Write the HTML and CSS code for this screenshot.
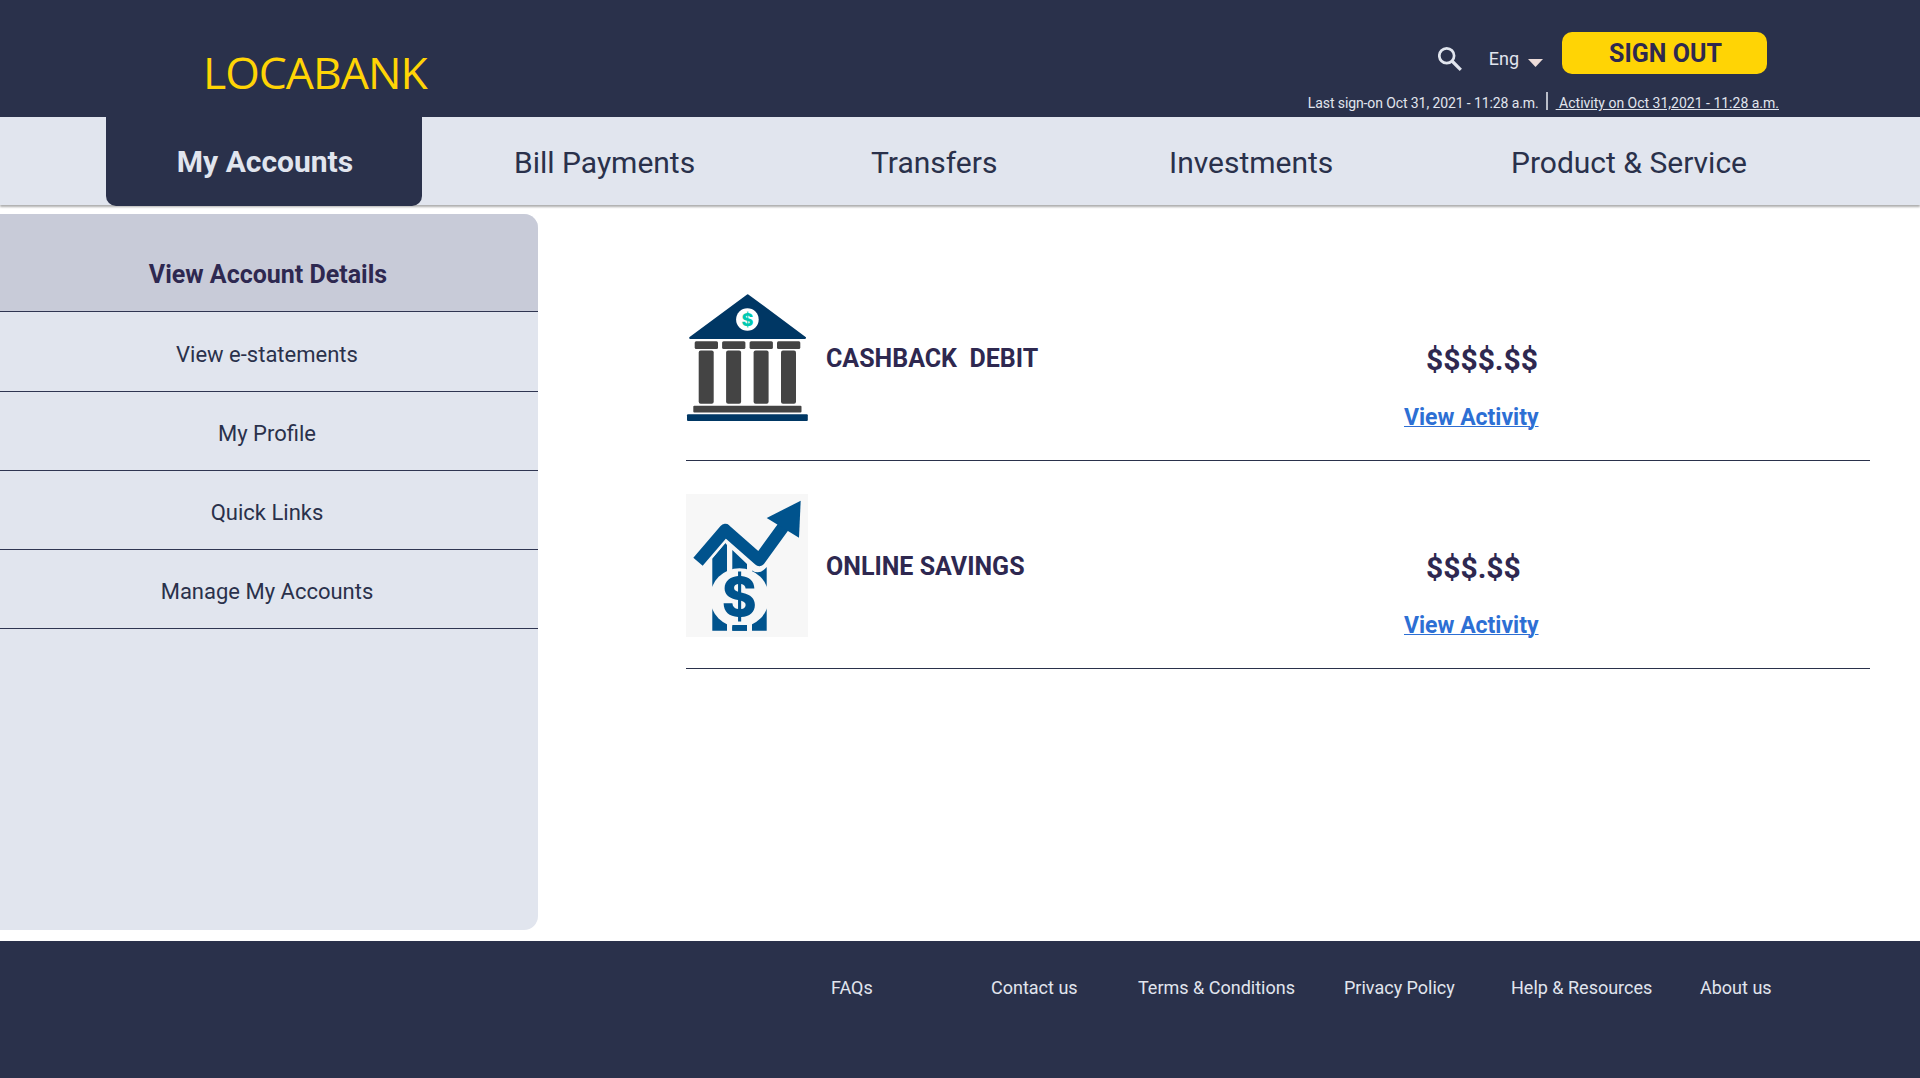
FILE: index.html
```html
<!DOCTYPE html>
<html lang="en">
<head>
<meta charset="utf-8">
<title>LOCABANK - My Accounts</title>
<link rel="stylesheet" href="styles.css">
</head>
<body>
<header class="header">
  <div class="logo">LOCABANK</div>
  <div class="header-side">
    <div class="tools">
      <svg class="search" viewBox="0 0 24 24" aria-hidden="true"><circle cx="8.700" cy="8.800" r="7.400" fill="none" stroke="#e1e5ee" stroke-width="2.700"/><path d="M14 14l8.800 8.800" stroke="#e1e5ee" stroke-width="3.200"/></svg>
      <span class="lang">Eng</span>
      <svg class="caret" viewBox="0 0 15 8" aria-hidden="true"><path d="M0 0h15L7.500 8z" fill="#eddcd9"/></svg>
      <button class="signout">SIGN OUT</button>
    </div>
    <div class="session">
      <span class="last">Last sign-on Oct 31, 2021 - 11:28 a.m.</span>
      <span class="bar"></span>
      <a class="activity"> Activity on Oct 31,2021 - 11:28 a.m.</a>
    </div>
  </div>
</header>
<nav class="nav">
  <a class="tab active">My Accounts</a>
  <a class="tab">Bill Payments</a>
  <a class="tab">Transfers</a>
  <a class="tab">Investments</a>
  <a class="tab">Product &amp; Service</a>
</nav>
<main class="main">
  <aside class="side">
    <a class="side-item current">View Account Details</a>
    <a class="side-item">View e-statements</a>
    <a class="side-item">My Profile</a>
    <a class="side-item">Quick Links</a>
    <a class="side-item">Manage My Accounts</a>
  </aside>
  <section class="accounts">
    <article class="account">
      <svg class="pic" viewBox="0 0 122 143" aria-hidden="true">
        <path d="M61.700 9.200L119 51.900H4.200z" fill="#003764" stroke="#003764" stroke-width="2" stroke-linejoin="round"/>
        <circle cx="61.400" cy="33.500" r="11.300" fill="#fff"/>
        <text class="coin-small" x="61.400" y="40" text-anchor="middle">$</text>
        <g fill="#444">
          <rect x="8.700" y="55.300" width="23.300" height="7.700" rx="1.500"/><rect x="36.100" y="55.300" width="23.300" height="7.700" rx="1.500"/><rect x="63.600" y="55.300" width="23.300" height="7.700" rx="1.500"/><rect x="91" y="55.300" width="23.300" height="7.700" rx="1.500"/>
          <rect x="12.700" y="64.500" width="15" height="53.300" rx="2"/><rect x="40.100" y="64.500" width="15" height="53.300" rx="2"/><rect x="67.600" y="64.500" width="15" height="53.300" rx="2"/><rect x="95" y="64.500" width="15" height="53.300" rx="2"/>
          <rect x="7.300" y="119.700" width="108.200" height="6.700" rx="1"/>
        </g>
        <rect x="1" y="128.300" width="120.800" height="6.700" rx="1" fill="#003764"/>
      </svg>
      <h2 class="name">CASHBACK&nbsp; DEBIT</h2>
      <div class="figures"><strong class="amount">$$$$.$$</strong><a class="view">View Activity</a></div>
    </article>
    <article class="account">
      <svg class="pic" viewBox="0 0 122 143" aria-hidden="true">
        <rect width="122" height="143" fill="#f7f7f7"/>
        <path d="M26.300 64.500L39.300 49L41 51V136.700H26.300zM46.300 56L61 70V136.700H46.300zM66 76.500Q74 81.500 80.700 73V136.700H66z" fill="#00538d"/>
        <path d="M12 67.700L39.300 35.500L73.500 66.500L97.300 33.300" fill="none" stroke="#f7f7f7" stroke-width="17.500" stroke-linejoin="round"/>
        <circle cx="53.500" cy="103.700" r="29.500" fill="#f7f7f7"/>
        <path d="M46.300 131H61V136.700H46.300z" fill="#00538d"/>
        <path d="M12 67.700L39.200 36L73.300 66L99 30.500" fill="none" stroke="#00538d" stroke-width="12.300" stroke-linejoin="round"/>
        <path d="M114.700 6.700L80.700 24L113 43.700z" fill="#00538d"/>
        <text class="coin-large" x="53.300" y="122.200" text-anchor="middle">$</text>
      </svg>
      <h2 class="name">ONLINE SAVINGS</h2>
      <div class="figures"><strong class="amount">$$$.$$</strong><a class="view">View Activity</a></div>
    </article>
  </section>
</main>
<footer class="footer">
  <a>FAQs</a><a>Contact us</a><a>Terms &amp; Conditions</a><a>Privacy Policy</a><a>Help &amp; Resources</a><a>About us</a>
</footer>
</body>
</html>
```
FILE: styles.css
```css
* { box-sizing: border-box; }

body {
  margin: 0;
  height: 1078px;
  display: flex;
  flex-direction: column;
  overflow: hidden;
  background: #fff;
  color: #2a314b;
  font-family: Roboto, "Liberation Sans", sans-serif;
}

.header {
  height: 117px;
  flex: none;
  display: flex;
  justify-content: space-between;
  padding: 32px 141px 0 203px;
  background: #2a314b;
  color: #e1e5ee;
}

.logo {
  height: 60px;
  margin-top: 10px;
  font: 400 44.5px/60px "Open Sans", sans-serif;
  letter-spacing: -1px;
  color: #ffd405;
}

.header-side { display: flex; flex-direction: column; align-items: flex-end; }

.tools { display: flex; height: 42px; padding-right: 12px; }
.search { width: 24px; height: 24px; margin: 15px 27px 0 0; }
.lang { margin: 15px 9px 0 0; font-size: 18px; line-height: 24px; }
.caret { width: 15px; height: 8px; margin: 27px 19px 0 0; }

.signout {
  width: 205px;
  height: 42px;
  padding: 1px 0 0 2px;
  border: 0;
  border-radius: 10px;
  background: #ffd405;
  color: #2e2850;
  font: 700 25px/40px Roboto, sans-serif;
}

.session { display: flex; height: 20px; margin-top: 19px; font-size: 14px; line-height: 20px; white-space: pre; }
.last { letter-spacing: -0.1px; }
.bar { width: 2px; height: 18px; margin: -1px 8px 0 7px; background: #b9bdc9; }
.activity { text-decoration: underline; }

.nav {
  height: 88px;
  flex: none;
  display: grid;
  grid-template-columns: 316px 357px 298px 343px 1fr;
  padding-left: 106px;
  background: #e1e5ee;
  box-shadow: 0 2px 2px rgba(0, 0, 0, .32);
  font-size: 30px;
}

.tab { padding-top: 3px; line-height: 85px; }
.nav .tab:nth-child(2) { padding-left: 92px; }
.nav .tab:nth-child(3) { padding-left: 92px; }
.nav .tab:nth-child(4) { padding-left: 92px; }
.nav .tab:nth-child(5) { padding-left: 91px; }
.nav .tab.active {
  height: 89px;
  padding: 2px 0 0 2px;
  border-radius: 0 0 10px 10px;
  background: #2a314b;
  color: #e1e5ee;
  font-weight: 700;
  text-align: center;
}

.main { flex: none; height: 736px; display: flex; padding-top: 9px; }

.side {
  width: 538px;
  height: 716px;
  overflow: hidden;
  border-radius: 0 14px 14px 0;
  background: #e1e5ee;
  font-size: 22px;
}

.side-item {
  display: flex;
  align-items: center;
  justify-content: center;
  height: 79px;
  padding: 4px 4px 0 0;
  border-bottom: 1px solid #2f3551;
}
.side-item.current {
  height: 98px;
  padding: 23px 2px 0 0;
  background: #c8cbd8;
  color: #2e2850;
  font-size: 25px;
  font-weight: 700;
}
.side-item.current + .side-item { height: 80px; padding-top: 6px; }

.accounts { width: 1184px; margin: 39px 0 0 148px; }

.account {
  display: grid;
  grid-template-columns: 140px 575px 1fr;
  height: 208px;
  padding-top: 33px;
  border-bottom: 1px solid #2a314b;
}
.pic { width: 122px; height: 143px; }
.coin-small { font: 800 18px Inter, sans-serif; fill: #00c9b1; }
.coin-large { font: 800 53px Inter, sans-serif; fill: #00538d; }

.name { margin: 57px 0 0; font-size: 25px; line-height: 32px; color: #2e2850; }
.figures { display: flex; flex-direction: column; align-items: flex-start; padding: 54px 0 0 3px; }
.amount { padding-left: 22px; font-size: 30px; line-height: 40px; color: #2e2850; }
.view { margin-top: 23px; font-size: 23px; line-height: 30px; font-weight: 700; color: #2d6fd4; text-decoration: underline; text-decoration-thickness: 1px; }

.footer {
  flex: 1;
  display: grid;
  grid-template-columns: 160px 147px 206px 167px 189px auto;
  padding: 37px 0 0 831px;
  background: #2a314b;
  color: #e1e5ee;
  font-size: 18px;
  line-height: 20px;
}
```
